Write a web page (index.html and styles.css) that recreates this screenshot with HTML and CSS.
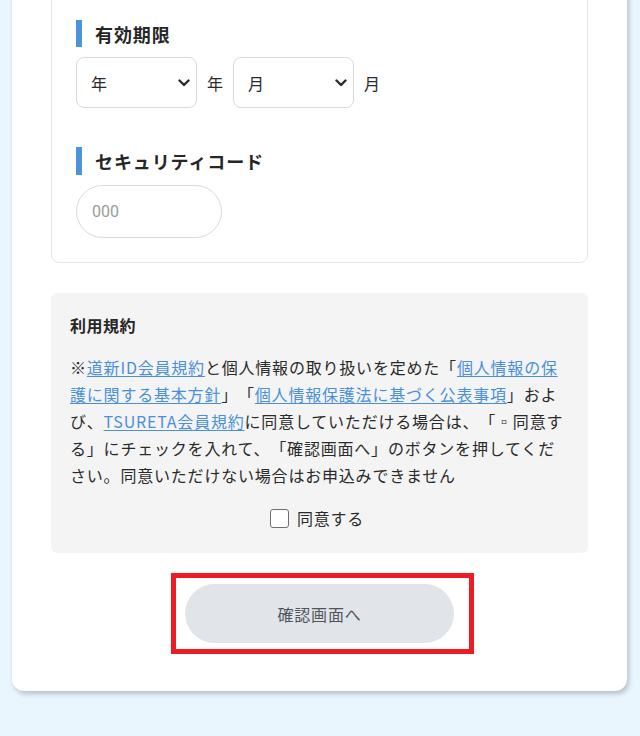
FILE: index.html
```html
<!DOCTYPE html>
<html lang="ja">
<head>
<meta charset="utf-8">
<title>お申込み</title>
<link rel="stylesheet" href="styles.css">
</head>
<body>
<div class="page">
  <main class="card">
    <section class="form-box">
      <div class="field">
        <h3 class="field-title">有効期限</h3>
        <div class="expiry">
          <span class="select-wrap">
            <select class="select"><option>年</option></select>
            <svg class="chev" width="12" height="8" viewBox="0 0 12 8"><path d="M1.5 1.5 L6 6 L10.5 1.5" fill="none" stroke="#2b2b2b" stroke-width="2.4" stroke-linecap="round" stroke-linejoin="round"/></svg>
          </span>
          <span class="unit">年</span>
          <span class="select-wrap">
            <select class="select"><option>月</option></select>
            <svg class="chev" width="12" height="8" viewBox="0 0 12 8"><path d="M1.5 1.5 L6 6 L10.5 1.5" fill="none" stroke="#2b2b2b" stroke-width="2.4" stroke-linecap="round" stroke-linejoin="round"/></svg>
          </span>
          <span class="unit">月</span>
        </div>
      </div>
      <div class="field field-gap">
        <h3 class="field-title title-tall">セキュリティコード</h3>
        <input class="code-input" type="text" placeholder="000">
      </div>
    </section>

    <section class="terms">
      <h4 class="terms-title">利用規約</h4>
      <p class="terms-text">※<a href="#">道新ID会員規約</a>と個人情報の取り扱いを定めた「<a href="#">個人情報の保護に関する基本方針</a>」「<a href="#">個人情報保護法に基づく公表事項</a>」および、<a href="#">TSURETA会員規約</a>に同意していただける場合は、「▫同意する」にチェックを入れて、「確認画面へ」のボタンを押してください。同意いただけない場合はお申込みできません</p>
      <label class="agree"><input type="checkbox" class="check"><span>同意する</span></label>
    </section>

    <div class="submit-wrap">
      <button class="submit" type="button">確認画面へ</button>
      <span class="highlight"></span>
    </div>
  </main>
</div>
</body>
</html>
```

FILE: styles.css
```css
* { box-sizing: border-box; }
html, body { margin: 0; padding: 0; }
body {
  background: #eaf6fe;
  font-family: "Noto Sans CJK JP", "Noto Sans", sans-serif;
  color: #2a2a2a;
  height: 736px;
  overflow: hidden;
}
.page {
  padding: 0 13px 0 12px;
}
.card {
  margin-top: -40px;
  background: #fff;
  border-radius: 12px;
  box-shadow: 2px 3px 5px rgba(0, 0, 0, 0.22);
  padding: 16px 39px 48px;
}
.form-box {
  border: 1px solid #e2e6ea;
  border-radius: 8px;
  padding: 43px 24px 24px;
}
.field-title {
  margin: 0;
  display: flex;
  align-items: center;
  height: 27px;
  font-size: 18px;
  font-weight: 700;
  letter-spacing: 0.05em;
  color: #262626;
}
.field-title::before {
  content: "";
  width: 6px;
  height: 100%;
  background: #4b94dc;
  margin-right: 13px;
  flex: none;
}
.title-tall { height: 28px; }
.field-gap { margin-top: 39px; }
.expiry {
  margin-top: 10px;
  display: flex;
  align-items: center;
  gap: 10px;
}
.select-wrap {
  position: relative;
  display: inline-block;
  width: 121px;
  height: 51px;
}
.select {
  appearance: none;
  -webkit-appearance: none;
  width: 100%;
  height: 100%;
  border: 1px solid #dadada;
  border-radius: 8px;
  background: #fff;
  padding: 0 0 0 14px;
  font-family: inherit;
  font-size: 16px;
  color: #2a2a2a;
}
.chev {
  position: absolute;
  right: 7px;
  top: 22px;
  pointer-events: none;
}
.unit {
  font-size: 16px;
  color: #2a2a2a;
}
.code-input {
  display: block;
  margin-top: 10px;
  width: 146px;
  height: 53px;
  border: 1px solid #dadada;
  border-radius: 27px;
  padding: 0 0 0 15px;
  font-family: "Roboto", "Noto Sans", sans-serif;
  font-size: 16px;
  color: #333;
  background: #fff;
}
.code-input::placeholder { color: #9a9a9a; }
.terms {
  margin-top: 30px;
  background: #f4f4f4;
  border-radius: 6px;
  padding: 20px 24px 23px 19px;
}
.terms-title {
  margin: 0;
  font-size: 16px;
  line-height: 24px;
  font-weight: 700;
  letter-spacing: 0.03em;
  color: #262626;
}
.terms-text {
  margin: 17px 0 0;
  font-size: 16px;
  line-height: 27px;
  letter-spacing: 0.05em;
  color: #2a2a2a;
  text-spacing-trim: space-all;
}
.terms-text a {
  color: #4a90d9;
  text-decoration: underline;
  text-underline-offset: 2px;
}
.agree {
  margin-top: 17px;
  height: 24px;
  display: flex;
  align-items: center;
  justify-content: center;
  gap: 8px;
  font-size: 16px;
  letter-spacing: 0.05em;
  color: #2a2a2a;
}
.check {
  appearance: none;
  -webkit-appearance: none;
  margin: 0;
  width: 19px;
  height: 19px;
  border: 1.5px solid #6f6f6f;
  border-radius: 3px;
  background: #fff;
}
.submit-wrap {
  position: relative;
  width: 269px;
  margin: 31px auto 0;
}
.submit {
  display: block;
  width: 100%;
  height: 59px;
  border: none;
  border-radius: 30px;
  background: #e1e4e9;
  font-family: inherit;
  font-size: 16px;
  letter-spacing: 0.05em;
  color: #50555c;
}
.highlight {
  position: absolute;
  top: -11px;
  left: -14px;
  right: -20px;
  bottom: -11px;
  border: 5px solid #ed1c24;
  pointer-events: none;
}
```
